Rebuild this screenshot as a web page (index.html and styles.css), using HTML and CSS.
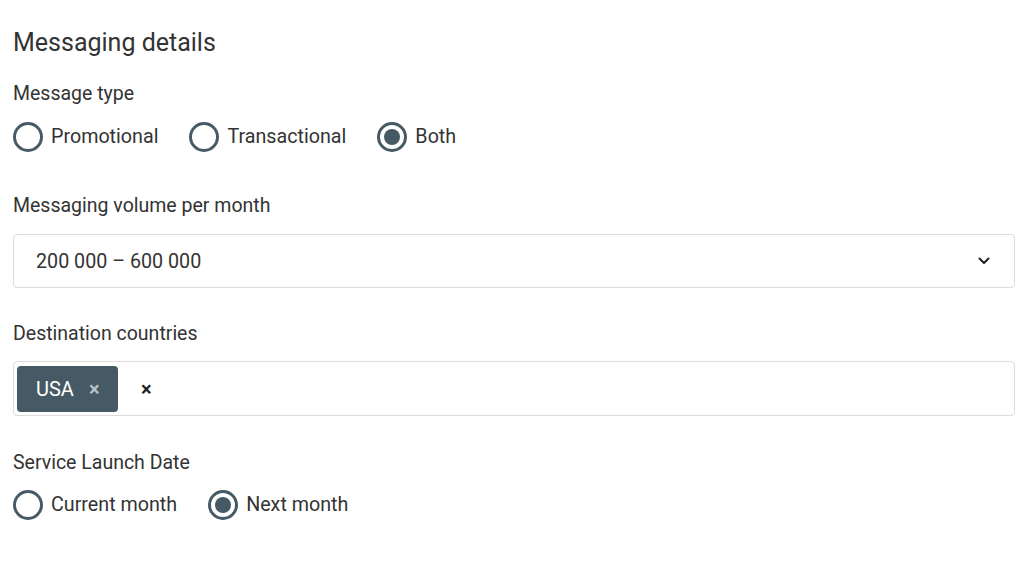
FILE: index.html
```html
<!DOCTYPE html>
<html lang="en">
<head>
<meta charset="utf-8">
<title>Messaging details</title>
<link rel="stylesheet" href="styles.css">
</head>
<body>
<main class="form">
  <h2 class="title">Messaging details</h2>

  <section class="field field-type">
    <div class="label">Message type</div>
    <div class="radios">
      <label class="radio"><span class="dot"></span>Promotional</label>
      <label class="radio"><span class="dot"></span>Transactional</label>
      <label class="radio checked"><span class="dot"></span>Both</label>
    </div>
  </section>

  <section class="field field-volume">
    <div class="label">Messaging volume per month</div>
    <div class="select">
      <span class="value">200 000 – 600 000</span>
      <svg class="chevron" width="12" height="8" viewBox="0 0 12 8"><path d="M1.5 1.5 L6 6 L10.5 1.5" fill="none" stroke="#222" stroke-width="2" stroke-linecap="round" stroke-linejoin="round"/></svg>
    </div>
  </section>

  <section class="field field-countries">
    <div class="label">Destination countries</div>
    <div class="tags">
      <span class="chip">USA<span class="chip-x">×</span></span>
      <span class="clear">×</span>
    </div>
  </section>

  <section class="field field-launch">
    <div class="label">Service Launch Date</div>
    <div class="radios">
      <label class="radio"><span class="dot"></span>Current month</label>
      <label class="radio checked"><span class="dot"></span>Next month</label>
    </div>
  </section>
</main>
</body>
</html>
```

FILE: styles.css
```css
html, body {
  margin: 0;
  padding: 0;
  background: #fff;
}
body {
  font-family: Roboto, "Liberation Sans", Arial, sans-serif;
  color: #333;
}
.form {
  padding: 27px 9px 0 13px;
  display: flex;
  flex-direction: column;
}
.title {
  margin: 0;
  font-size: 25px;
  font-weight: 400;
  line-height: 32px;
  color: #333;
}
.field {
  display: flex;
  flex-direction: column;
}
.field-type { margin-top: 23px; }
.field-volume { margin-top: 42px; }
.field-countries { margin-top: 34px; }
.field-launch { margin-top: 35px; }
.label {
  font-size: 19.5px;
  line-height: 24px;
  color: #333;
}
.radios {
  display: flex;
  gap: 31px;
  margin-top: 16px;
}
.field-launch .radios { margin-top: 15px; }
.radio {
  display: flex;
  align-items: center;
  gap: 8px;
  font-size: 19.7px;
  line-height: 30px;
  color: #333;
}
.dot {
  width: 30px;
  height: 30px;
  box-sizing: border-box;
  border: 3px solid #455a64;
  border-radius: 50%;
  display: flex;
  align-items: center;
  justify-content: center;
}
.checked .dot::after {
  content: "";
  width: 16px;
  height: 16px;
  border-radius: 50%;
  background: #455a64;
}
.select {
  margin-top: 16px;
  height: 54px;
  box-sizing: border-box;
  border: 1px solid #dcdcdc;
  border-radius: 4px;
  display: flex;
  align-items: center;
  justify-content: space-between;
  padding: 0 24px 0 22px;
  font-size: 19.7px;
  color: #333;
}
.tags {
  margin-top: 15px;
  height: 55px;
  box-sizing: border-box;
  border: 1px solid #dcdcdc;
  border-radius: 4px;
  display: flex;
  align-items: center;
  padding: 0 3px;
}
.chip {
  height: 46px;
  width: 101px;
  box-sizing: border-box;
  background: #455a64;
  color: #fff;
  border-radius: 4px;
  display: flex;
  align-items: center;
  padding-left: 19px;
  font-size: 20px;
}
.chip-x {
  margin-left: 15px;
  color: #b9c3c8;
  font-size: 20px;
  font-weight: 700;
}
.clear {
  margin-left: 23px;
  font-size: 20px;
  font-weight: 700;
  color: #222;
}
```
